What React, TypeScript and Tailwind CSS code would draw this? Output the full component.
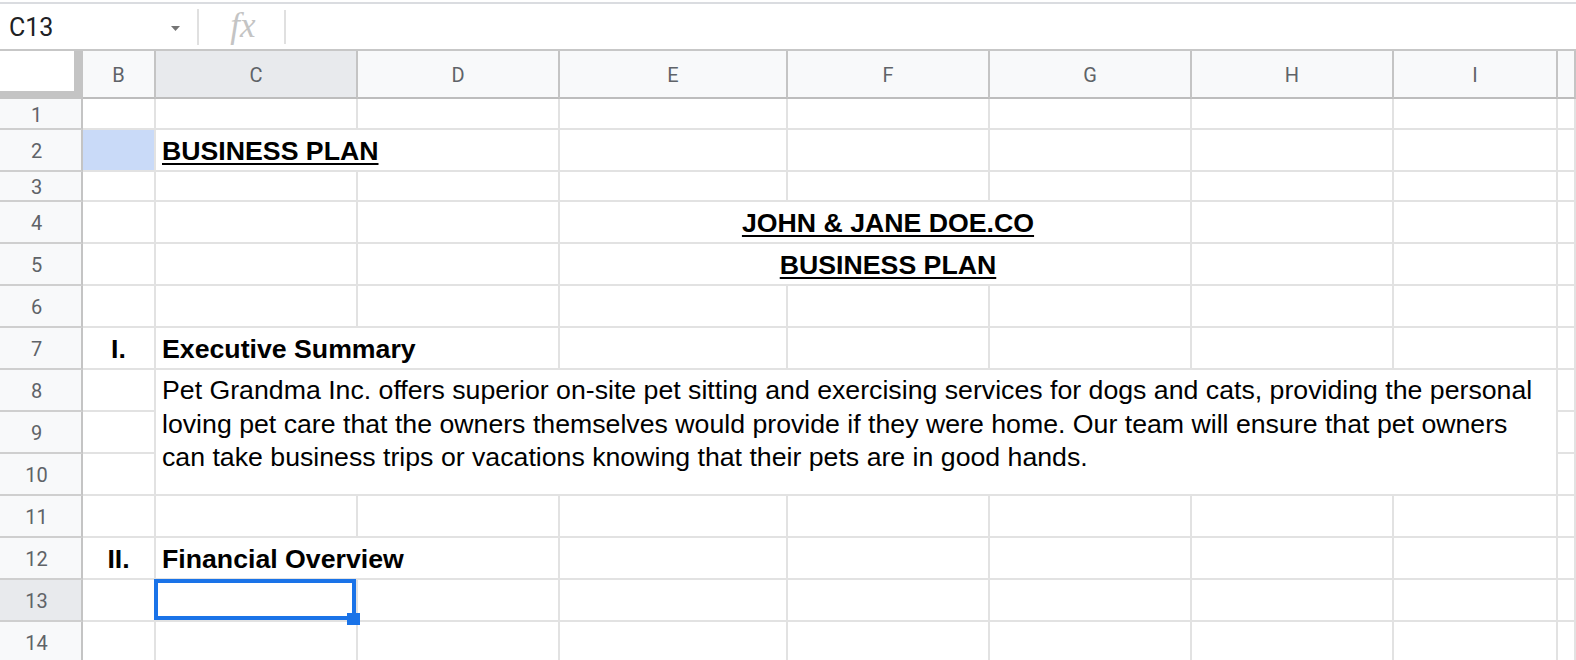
import type { ReactNode } from 'react';

const COLS = ['B', 'C', 'D', 'E', 'F', 'G', 'H', 'I', ''];

const grid = 'border-r-2 border-b-2 border-[#e2e2e2]';
const bodyFont = "font-['Liberation_Sans',Arial,sans-serif] text-[26.7px] leading-[33.5px] text-black";

function RowHead({ n, active = false }: { n: number; active?: boolean }) {
  return (
    <div
      className={`flex items-center justify-center pr-[8px] pt-[2px] border-r-2 border-r-[#c4c4c4] border-b-2 border-b-[#cfcfcf] font-['Roboto',sans-serif] text-[20px] text-[#5f6368] ${
        active ? 'bg-[#e8eaed]' : 'bg-[#f8f9fa]'
      }`}
    >
      {n}
    </div>
  );
}

function Empty({ className = '' }: { className?: string }) {
  return <div className={`${grid} ${className}`} />;
}

function Blanks({ count }: { count: number }) {
  return (
    <>
      {Array.from({ length: count }, (_, i) => (
        <Empty key={i} />
      ))}
    </>
  );
}

function Label({ children }: { children: ReactNode }) {
  return <div className={`${grid} ${bodyFont} flex items-center justify-center pt-[4px] font-bold`}>{children}</div>;
}

function Heading({ children, underline = false }: { children: ReactNode; underline?: boolean }) {
  return (
    <div className={`${grid} ${bodyFont} col-span-2 flex items-center pl-[6px] pt-[4px] font-bold whitespace-nowrap`}>
      <span className={underline ? 'underline decoration-[2px] underline-offset-[3px]' : ''}>{children}</span>
    </div>
  );
}

function Title({ children }: { children: ReactNode }) {
  return (
    <div className={`${grid} ${bodyFont} col-span-3 flex items-center justify-center pl-[26px] pt-[3px] font-bold whitespace-nowrap`}>
      <span className="underline decoration-[2px] underline-offset-[3px]">{children}</span>
    </div>
  );
}

function FormulaBar() {
  return (
    <div className="h-[51px] pt-[2px] bg-white">
      <div className="h-full flex items-center border-t-2 border-t-[#dadce0] border-b-2 border-b-[#c7c7c7]">
        <div className="w-[197px] h-full flex items-center justify-between pl-[9px] pr-[17px] pt-[3px]">
          <span className="font-['Roboto',sans-serif] text-[25px] text-[#202124]">C13</span>
          <svg width="9" height="5" viewBox="0 0 9 5">
            <path d="M0 0h9L4.5 5z" fill="#757575" />
          </svg>
        </div>
        <div className="w-[2px] h-[36px] bg-[#e0e0e0]" />
        <div className="w-[85px] flex items-center justify-center pl-[3px]">
          <span className="font-['Liberation_Serif',serif] italic text-[35px] leading-none text-[#c4c4c4] -mt-[3px]">
            fx
          </span>
        </div>
        <div className="w-[2px] h-[34px] bg-[#e0e0e0]" />
      </div>
    </div>
  );
}

export default function App() {
  return (
    <div className="w-[1576px] h-[660px] overflow-hidden bg-white">
      <FormulaBar />
      <div className="grid grid-cols-[83px_73px_202px_202px_228px_202px_202px_202px_164px_1fr] grid-rows-[48px_31px_42px_30px_repeat(11,42px)]">
        {/* column headers */}
        <div className="bg-white border-r-[9px] border-b-[8px] border-[#c4c4c4]" />
        {COLS.map((c) => (
          <div
            key={c || 'J'}
            className={`flex items-center justify-center pt-[2px] border-r-2 border-r-[#c4c4c4] border-b-2 border-b-[#bdbdbd] font-['Roboto',sans-serif] text-[20px] text-[#5f6368] ${
              c === 'C' ? 'bg-[#e8eaed]' : 'bg-[#f8f9fa]'
            }`}
          >
            {c}
          </div>
        ))}

        {/* 1 */}
        <RowHead n={1} />
        <Blanks count={9} />

        {/* 2 */}
        <RowHead n={2} />
        <Empty className="bg-[#c9daf8] border-[#b9c9e6]" />
        <Heading underline>BUSINESS PLAN</Heading>
        <Blanks count={6} />

        {/* 3 */}
        <RowHead n={3} />
        <Blanks count={9} />

        {/* 4 */}
        <RowHead n={4} />
        <Blanks count={3} />
        <Title>JOHN &amp; JANE DOE.CO</Title>
        <Blanks count={3} />

        {/* 5 */}
        <RowHead n={5} />
        <Blanks count={3} />
        <Title>BUSINESS PLAN</Title>
        <Blanks count={3} />

        {/* 6 */}
        <RowHead n={6} />
        <Blanks count={9} />

        {/* 7 */}
        <RowHead n={7} />
        <Label>I.</Label>
        <Heading>Executive Summary</Heading>
        <Blanks count={6} />

        {/* 8-10 */}
        <RowHead n={8} />
        <Empty />
        <div className={`${grid} ${bodyFont} col-span-7 row-span-3 pl-[6px] pt-[4px] whitespace-nowrap`}>
          Pet Grandma Inc. offers superior on-site pet sitting and exercising services for dogs and cats, providing the personal
          <br />
          loving pet care that the owners themselves would provide if they were home. Our team will ensure that pet owners
          <br />
          can take business trips or vacations knowing that their pets are in good hands.
        </div>
        <Empty />
        <RowHead n={9} />
        <Empty />
        <Empty />
        <RowHead n={10} />
        <Empty />
        <Empty />

        {/* 11 */}
        <RowHead n={11} />
        <Blanks count={9} />

        {/* 12 */}
        <RowHead n={12} />
        <Label>II.</Label>
        <Heading>Financial Overview</Heading>
        <Blanks count={6} />

        {/* 13 */}
        <RowHead n={13} active />
        <Empty />
        <div className={`${grid} relative`}>
          <div className="absolute -left-[2px] -top-[1px] right-0 bottom-0 border-4 border-[#1a73e8]" />
          <div className="absolute -right-[4px] -bottom-[5px] w-[13px] h-[12px] bg-[#1a73e8]" />
        </div>
        <Blanks count={7} />

        {/* 14 */}
        <RowHead n={14} />
        <Blanks count={9} />
      </div>
    </div>
  );
}
